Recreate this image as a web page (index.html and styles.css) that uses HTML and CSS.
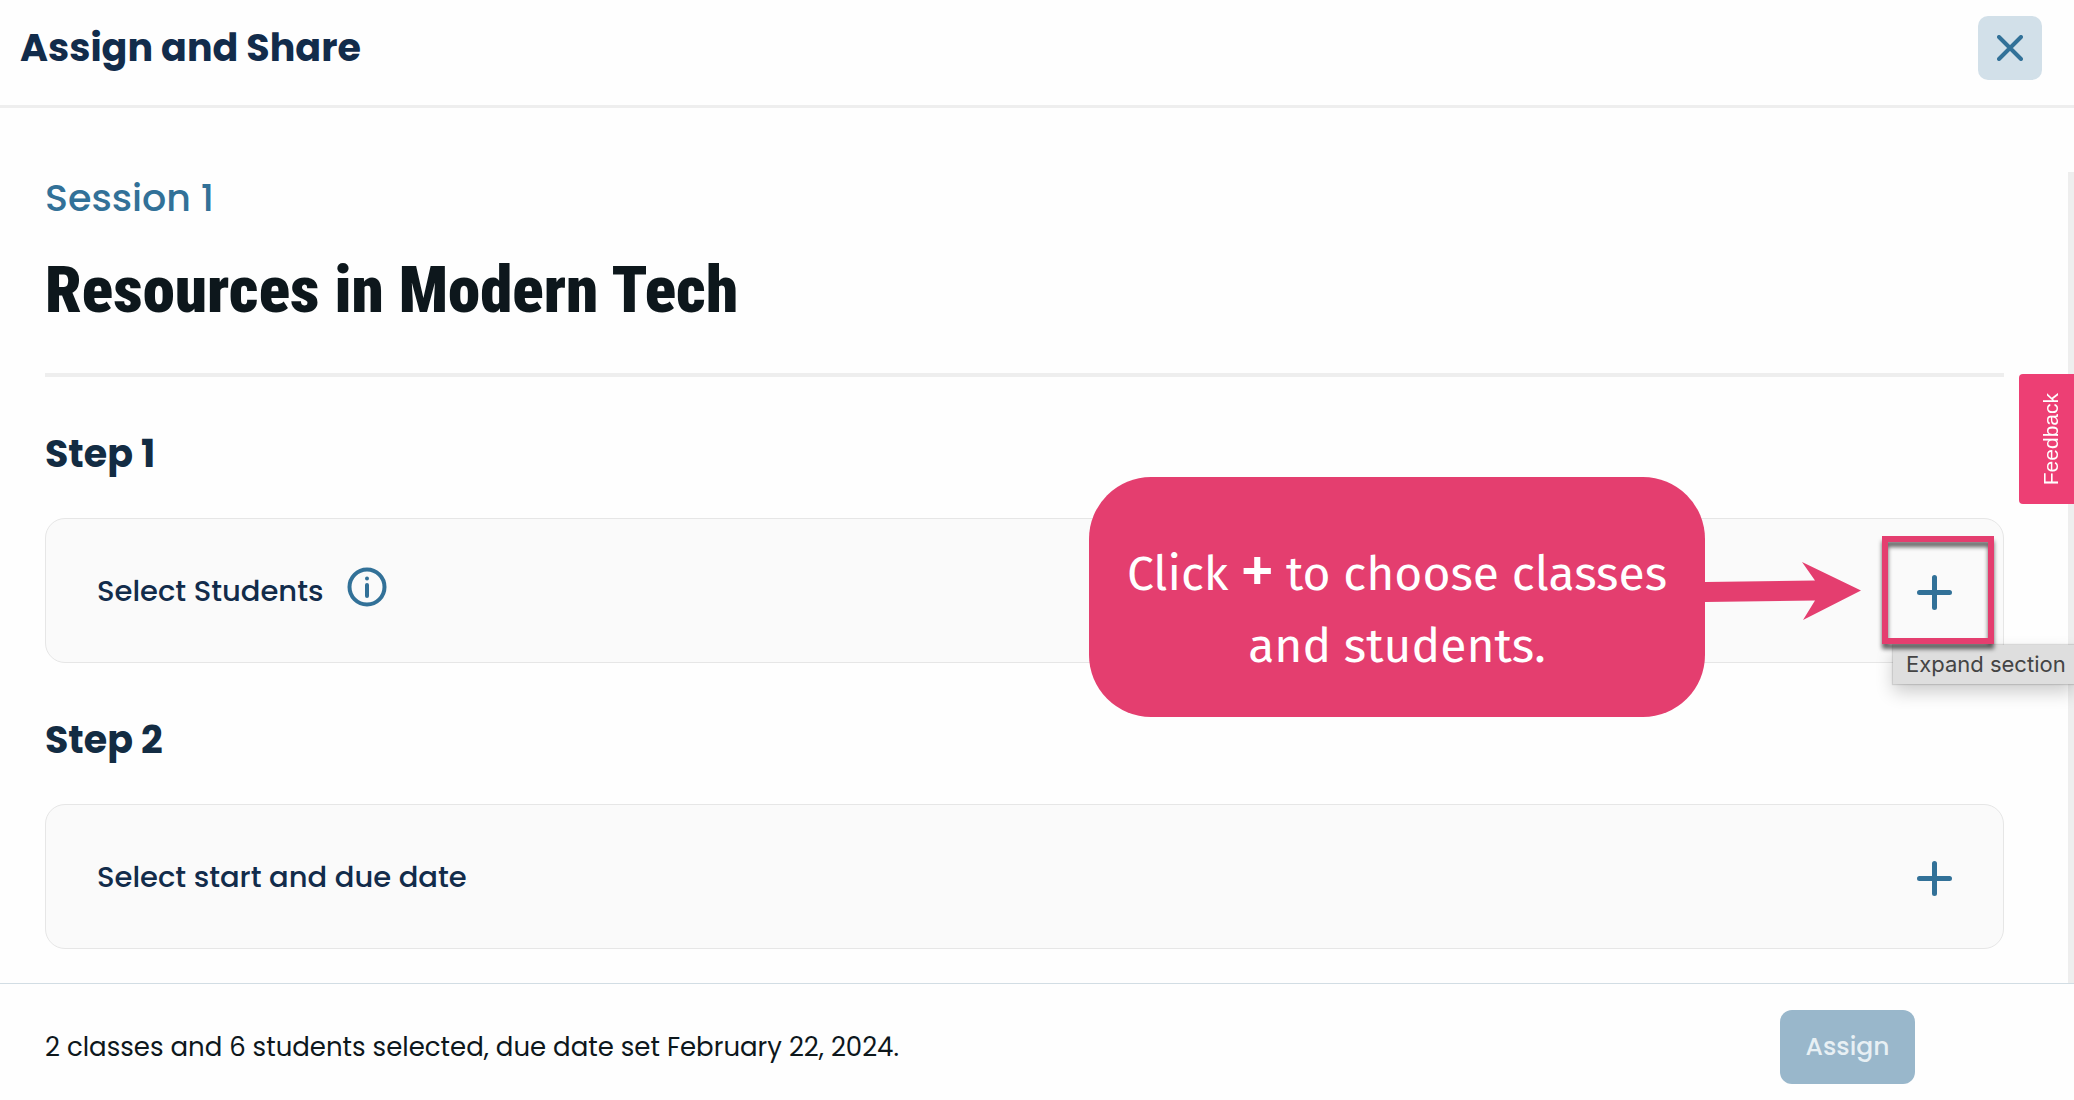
FILE: index.html
```html
<!DOCTYPE html>
<html lang="en">
<head>
<meta charset="utf-8">
<meta name="viewport" content="width=device-width, initial-scale=1">
<title>Assign and Share</title>
<link rel="stylesheet" href="styles.css">
</head>
<body>
<header class="header">
  <h1 class="header-title">Assign and Share</h1>
  <button class="close" type="button" aria-label="Close">
    <svg width="26" height="26" viewBox="0 0 26 26" aria-hidden="true"><path d="M2 2 24 24M24 2 2 24"/></svg>
  </button>
</header>

<div class="body">
  <main class="content">
    <p class="session">Session 1</p>
    <h2 class="title">Resources in Modern Tech</h2>

    <section class="step">
      <h3 class="step-title">Step 1</h3>
      <div class="card">
        <span class="card-label">Select Students</span>
        <button class="info" type="button" aria-label="About selecting students">
          <svg width="40" height="40" viewBox="0 0 40 40" aria-hidden="true">
            <circle class="ring" cx="20" cy="20" r="17.5"/>
            <circle class="dot" cx="20" cy="11.5" r="2"/>
            <path class="stem" d="M20 18v11"/>
          </svg>
        </button>
        <button class="expand" type="button" aria-label="Expand section">
          <svg width="35" height="35" viewBox="0 0 35 35" aria-hidden="true"><path d="M17.500 2.500v30M2.500 17.500h30"/></svg>
        </button>
        <div class="tooltip" role="tooltip">Expand section</div>
        <div class="highlight"></div>
        <div class="callout">
          <p class="callout-text">Click <b class="callout-key">+</b> to choose classes<br>and students.</p>
          <svg class="arrow" width="156" height="60" viewBox="0 0 156 60" aria-hidden="true"><path d="M0 21 110 19.500 97 1 156 29.500 98 59 110 39.500 0 41Z"/></svg>
        </div>
      </div>
    </section>

    <section class="step">
      <h3 class="step-title">Step 2</h3>
      <div class="card">
        <span class="card-label">Select start and due date</span>
        <button class="expand" type="button" aria-label="Expand section">
          <svg width="35" height="35" viewBox="0 0 35 35" aria-hidden="true"><path d="M17.500 2.500v30M2.500 17.500h30"/></svg>
        </button>
      </div>
    </section>
  </main>
  <div class="track"></div>
  <button class="feedback" type="button"><span class="feedback-text">Feedback</span></button>
</div>

<footer class="footer">
  <p class="summary">2 classes and 6 students selected, due date set February 22, 2024.</p>
  <button class="assign" type="button" disabled>Assign</button>
</footer>
</body>
</html>
```

FILE: styles.css
```css
* {
  box-sizing: border-box;
}

body {
  margin: 0;
  min-height: 100vh;
  display: flex;
  flex-direction: column;
  overflow-x: hidden;
  background: #fefefe;
  color: #0d171c;
  font-family: Poppins, Inter, sans-serif;
}

h1, h2, h3, p {
  margin: 0;
}

button {
  margin: 0;
  padding: 0;
  border: 0;
  background: none;
  font-family: inherit;
}

svg {
  display: block;
  fill: none;
  stroke: #327198;
  stroke-linecap: round;
}

.header {
  display: flex;
  align-items: flex-start;
  justify-content: space-between;
  padding: 16px 32px 25px 20px;
  border-bottom: 3px solid #eee;
}

.header-title {
  color: #122c4b;
  font-size: 38px;
  font-weight: 700;
  line-height: 64px;
}

.close {
  display: grid;
  place-items: center;
  width: 64px;
  height: 64px;
  border-radius: 10px;
  background: #d2e0e9;
}

.close svg {
  stroke-width: 4;
}

.body {
  position: relative;
  display: flex;
  flex: 1;
}

.content {
  flex: 1;
  padding: 60px 64px 34px 45px;
}

.track {
  width: 6px;
  margin-top: 64px;
  background: #eee;
}

.session {
  color: #327198;
  font-size: 38px;
  font-weight: 500;
  line-height: 60px;
}

.title {
  padding: 24px 0 44px;
  border-bottom: 4px solid #eee;
  font-family: "Roboto Condensed", "DejaVu Sans Condensed", sans-serif;
  font-size: 65px;
  font-weight: 900;
  line-height: 77px;
}

.step {
  padding-top: 47px;
}

.step-title {
  margin-bottom: 34px;
  color: #132c43;
  font-size: 38px;
  font-weight: 700;
  line-height: 60px;
}

.card {
  position: relative;
  display: flex;
  align-items: center;
  height: 145px;
  padding: 0 51px;
  border: 1px solid #e6e6e6;
  border-radius: 20px;
  background: #fafafa;
}

.card-label {
  color: #122c4b;
  font-size: 29px;
  font-weight: 500;
  line-height: 40px;
}

.info {
  margin: 0 0 8px 24px;
}

.ring {
  stroke-width: 4;
}

.dot {
  fill: #327198;
  stroke: none;
}

.stem {
  stroke-width: 4;
}

.expand {
  margin: 4px 0 0 auto;
}

.expand svg {
  stroke-width: 5;
}

.highlight {
  position: absolute;
  top: 17px;
  right: 9px;
  width: 112px;
  height: 108px;
  border: 6px solid #e43e6f;
  filter: drop-shadow(0 5px 2px #00000099);
}

.tooltip {
  position: absolute;
  top: 126px;
  right: -71px;
  width: 181px;
  padding-left: 13px;
  background: #dedede;
  box-shadow: 0 0 1px 1px #0000001f, 0 8px 18px #00000033;
  color: #444;
  font-family: Inter, sans-serif;
  font-size: 22px;
  line-height: 39px;
  white-space: nowrap;
}

.callout {
  position: absolute;
  top: -42px;
  right: 142px;
  display: flex;
  align-items: center;
}

.callout-text {
  width: 616px;
  padding: 61px 32px 35px;
  border-radius: 62px;
  background: #e43e6f;
  color: #fff;
  font-family: "Trebuchet MS", "Fira Sans", "Open Sans", sans-serif;
  font-size: 48px;
  line-height: 72px;
  text-align: center;
  white-space: nowrap;
}

.callout-key {
  font-family: "Trebuchet MS", "Noto Sans", sans-serif;
  font-size: 56px;
  line-height: 1px;
}

.arrow {
  margin-bottom: 12px;
  fill: #e43e6f;
  stroke: none;
}

.feedback {
  position: absolute;
  top: 266px;
  right: 0;
  display: grid;
  place-items: center;
  width: 55px;
  height: 130px;
  padding-left: 8px;
  border-radius: 4px 0 0 4px;
  background: #ed3f74;
  color: #fff;
  font-family: Arial, "Liberation Sans", sans-serif;
  font-size: 21px;
}

.feedback-text {
  writing-mode: vertical-rl;
  rotate: 180deg;
}

.footer {
  display: flex;
  align-items: center;
  justify-content: space-between;
  padding: 26px 159px 16px 45px;
  border-top: 1px solid #d2dde4;
}

.summary {
  font-size: 26px;
  line-height: 40px;
}

.assign {
  width: 135px;
  height: 74px;
  border-radius: 12px;
  background: #99b7cb;
  color: #e8f0f4;
  font-size: 25px;
  font-weight: 500;
}
```
